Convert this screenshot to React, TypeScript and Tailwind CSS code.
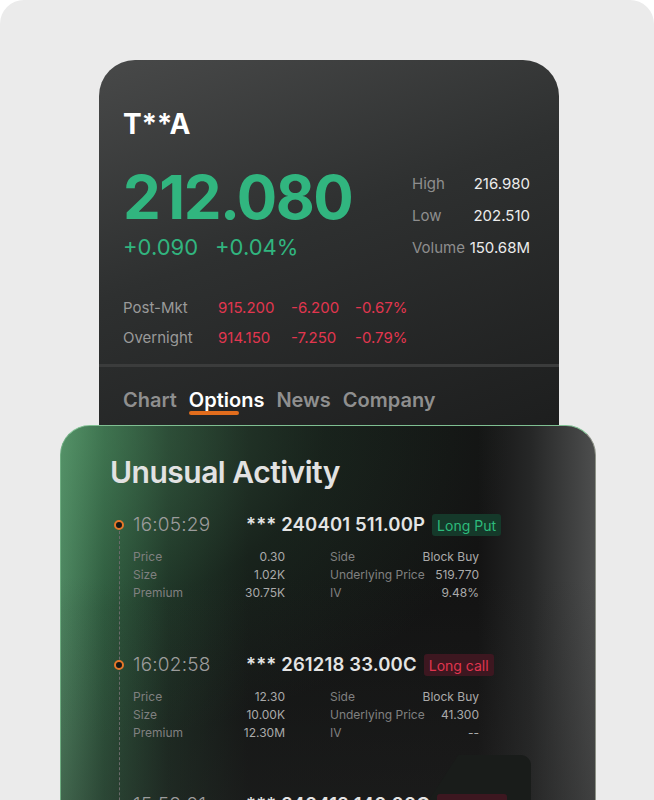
import React from 'react';

const font = { fontFamily: 'Inter, "Noto Sans", sans-serif' };

interface Trade {
  time: string;
  contract: string;
  tag: string;
  tagKind: 'put' | 'call';
  price: string;
  size: string;
  premium: string;
  side: string;
  underlying: string;
  iv: string;
}

const trades: Trade[] = [
  {
    time: '16:05:29',
    contract: '*** 240401 511.00P',
    tag: 'Long Put',
    tagKind: 'put',
    price: '0.30',
    size: '1.02K',
    premium: '30.75K',
    side: 'Block Buy',
    underlying: '519.770',
    iv: '9.48%',
  },
  {
    time: '16:02:58',
    contract: '*** 261218 33.00C',
    tag: 'Long call',
    tagKind: 'call',
    price: '12.30',
    size: '10.00K',
    premium: '12.30M',
    side: 'Block Buy',
    underlying: '41.300',
    iv: '--',
  },
  {
    time: '15:58:21',
    contract: '*** 240412 140.00C',
    tag: 'Long call',
    tagKind: 'call',
    price: '1.85',
    size: '2.40K',
    premium: '444.00K',
    side: 'Block Buy',
    underlying: '138.120',
    iv: '31.20%',
  },
];

const StatRow = ({ label, value }: { label: string; value: string }) => (
  <div className="flex items-center justify-between h-[32px]">
    <span className="text-[15px] text-[#8e8e8e]">{label}</span>
    <span className="text-[15px] text-[#ececec]">{value}</span>
  </div>
);

const ExtRow = ({ label, a, b, c }: { label: string; a: string; b: string; c: string }) => (
  <div className="flex items-center h-[30px] text-[15px]">
    <span className="w-[95px] text-[#9a9a9a]">{label}</span>
    <span className="w-[73px] text-[#e2364f]">{a}</span>
    <span className="w-[64px] text-[#e2364f]">{b}</span>
    <span className="text-[#e2364f]">{c}</span>
  </div>
);

const TradeItem = ({ t }: { t: Trade }) => (
  <div className="h-[140px]">
    <div className="flex items-center h-[26px]">
      <div className="w-[23px] flex justify-start">
        <div className="w-[10px] h-[10px] rounded-full border-2 border-[#e6772a] bg-[#151716] relative z-10 ml-[4px]" />
      </div>
      <span className="w-[113px] text-[19px] font-light text-[#9c9c9c] tracking-[0.2px]">{t.time}</span>
      <span className="text-[18.5px] font-semibold text-[#e4e4e4] tracking-[0.15px]">{t.contract}</span>
      <span
        className={
          t.tagKind === 'put'
            ? 'ml-[7px] px-[5px] h-[22px] flex items-center rounded-[3px] text-[14px] bg-[#15392a] text-[#2dbb7c]'
            : 'ml-[7px] px-[5px] h-[22px] flex items-center rounded-[3px] text-[14px] bg-[#3d1720] text-[#e0354f]'
        }
      >
        {t.tag}
      </span>
    </div>
    <div className="pl-[23px] mt-[10px] grid grid-cols-[152px_149px] gap-x-[45px] text-[12px] leading-[18px]">
      <div className="flex flex-col">
        <div className="flex justify-between"><span className="text-[#808080]">Price</span><span className="text-[#aaaaaa]">{t.price}</span></div>
        <div className="flex justify-between"><span className="text-[#808080]">Size</span><span className="text-[#aaaaaa]">{t.size}</span></div>
        <div className="flex justify-between"><span className="text-[#808080]">Premium</span><span className="text-[#aaaaaa]">{t.premium}</span></div>
      </div>
      <div className="flex flex-col">
        <div className="flex justify-between"><span className="text-[#808080]">Side</span><span className="text-[#aaaaaa]">{t.side}</span></div>
        <div className="flex justify-between"><span className="text-[#808080]">Underlying Price</span><span className="text-[#aaaaaa]">{t.underlying}</span></div>
        <div className="flex justify-between"><span className="text-[#808080]">IV</span><span className="text-[#aaaaaa]">{t.iv}</span></div>
      </div>
    </div>
  </div>
);

export default function App() {
  return (
    <div className="w-[654px] h-[800px] bg-white overflow-hidden" style={font}>
      <div className="h-full rounded-t-[24px] bg-[#ebebeb] overflow-hidden flex flex-col items-center pt-[60px]">
        {/* quote card */}
        <div className="ml-[4px] w-[460px] h-[366px] shrink-0 rounded-t-[36px] bg-[linear-gradient(160deg,#484949_0%,#2e3030_45%,#1d1e1e_100%)] flex flex-col">
          <div className="pl-[24px] pr-[26px] pt-[49px]">
            <div className="text-[28px] font-bold text-white leading-[30px] tracking-[-0.3px]">T**A</div>
            <div className="flex justify-between mt-[28px]">
              <div>
                <div className="text-[60px] font-bold text-[#31b57f] leading-[60px] tracking-[-1.5px]">212.080</div>
                <div className="flex gap-[17px] mt-[7px] text-[22px] text-[#31b57f] leading-[26px]">
                  <span>+0.090</span>
                  <span>+0.04%</span>
                </div>
              </div>
              <div className="w-[118px] mr-[3px] mt-[1px]">
                <StatRow label="High" value="216.980" />
                <StatRow label="Low" value="202.510" />
                <StatRow label="Volume" value="150.68M" />
              </div>
            </div>
            <div className="mt-[29px]">
              <ExtRow label="Post-Mkt" a="915.200" b="-6.200" c="-0.67%" />
              <ExtRow label="Overnight" a="914.150" b="-7.250" c="-0.79%" />
            </div>
          </div>
          <div className="mt-[11px] h-[3px] bg-[#3b3c3c]" />
          <div className="pl-[24px] pt-[20px] flex gap-[12px] text-[20px] font-semibold leading-[26px] text-[#8f8f8f]">
            <span>Chart</span>
            <span className="relative text-white">
              <span className="absolute left-[0px] bottom-[-2px] w-[50px] h-[4px] rounded-full bg-[#e26d1d]" />
              <span className="relative">Options</span>
            </span>
            <span>News</span>
            <span>Company</span>
          </div>
        </div>

        {/* unusual activity card */}
        <div className="relative ml-[2px] w-[536px] flex-1 shrink-0 -mt-[1px] rounded-t-[30px] border border-b-0 border-t-[#7fbf92] border-l-[#6fae82] border-r-[#8c9186] overflow-hidden bg-[linear-gradient(90deg,#4f8762_0%,#2d573c_8%,#1a2a20_20%,#121413_35%,#131313_78%,#262727_88%,#3d3e3e_95%,#4d4e4e_100%)]">
          <div className="absolute inset-0 bg-[radial-gradient(ellipse_at_top_left,rgba(90,160,110,0.45)_0%,rgba(60,120,80,0.15)_35%,rgba(0,0,0,0)_60%)]" />
          <div className="absolute inset-0 bg-[linear-gradient(180deg,rgba(0,0,0,0)_0%,rgba(0,0,0,0)_40%,rgba(40,40,40,0.35)_100%)]" />
          <div className="absolute right-[64px] top-[329px] w-[112px] h-[60px] bg-[#191c1a] rounded-tr-[10px] [clip-path:polygon(35%_0,100%_0,100%_100%,0_100%)]" />
          <div className="relative pl-[49px] pt-[28px]">
            <div className="text-[30px] font-semibold text-[#e2e2e2] leading-[36px] tracking-[-0.5px]">Unusual Activity</div>
            <div className="relative mt-[22px]">
              <div className="absolute left-[9px] top-[14px] h-[400px] border-l border-dashed border-[#6a6a6a]" />
              {trades.map((t) => (
                <TradeItem key={t.time} t={t} />
              ))}
            </div>
          </div>
        </div>
      </div>
    </div>
  );
}
